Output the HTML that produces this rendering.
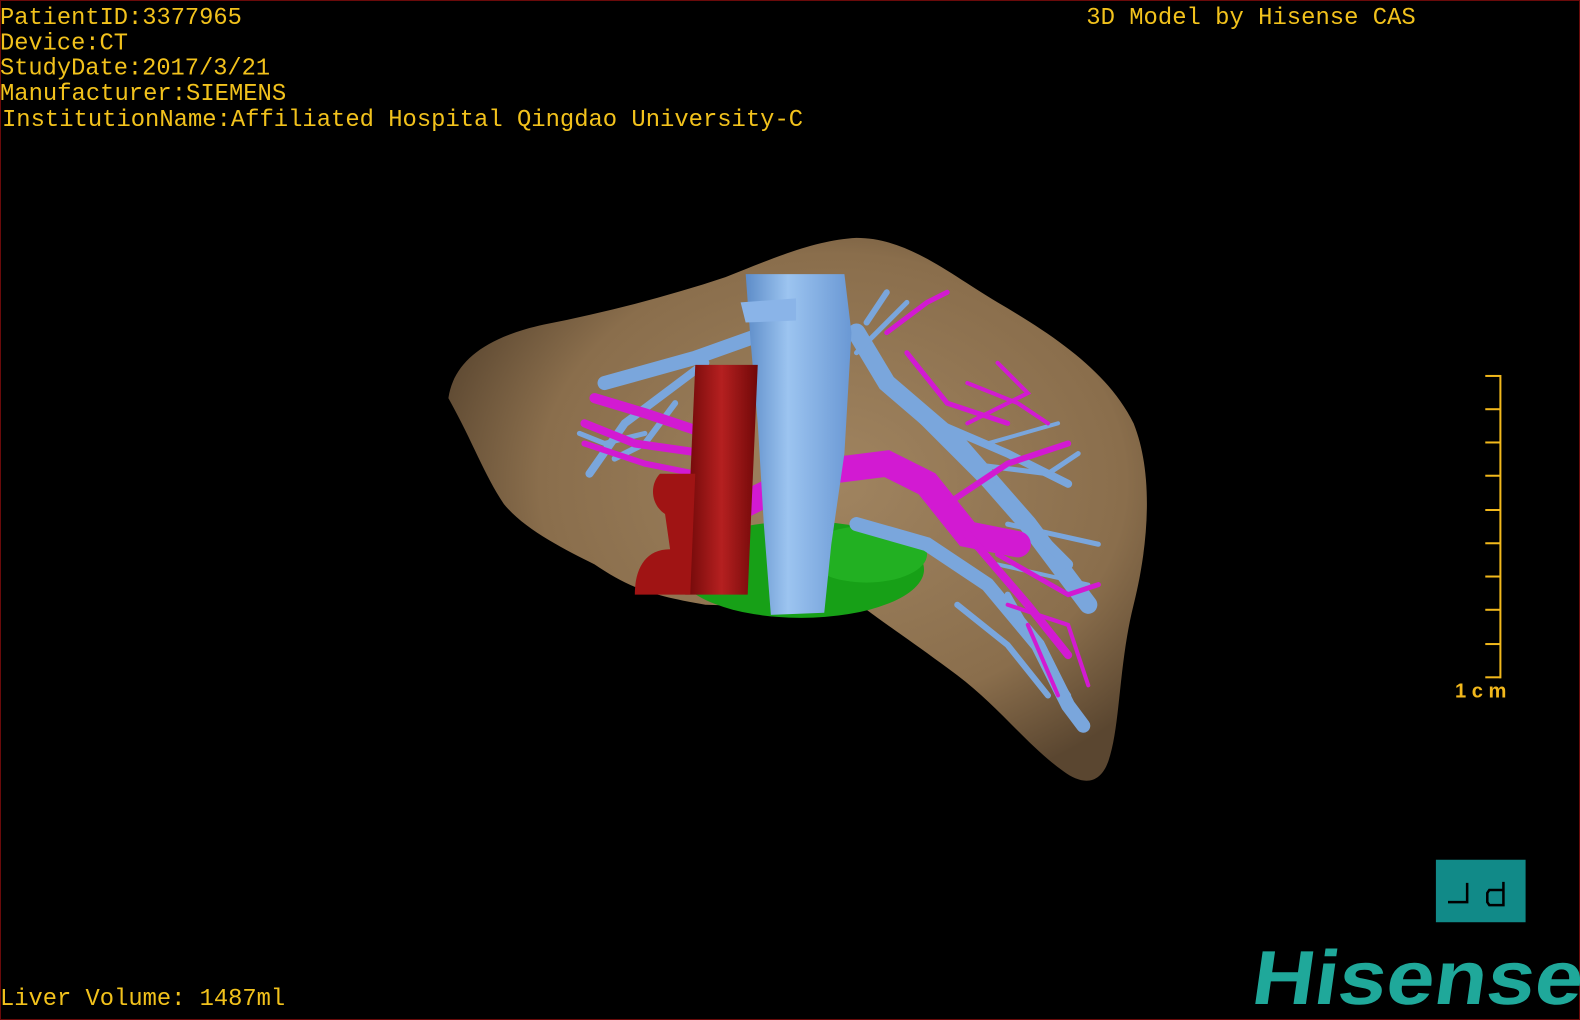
<!DOCTYPE html>
<html><head><meta charset="utf-8"><style>
html,body{margin:0;padding:0;background:#000;overflow:hidden}
svg{display:block}
text{font-family:"Liberation Mono",monospace}
</style></head><body>
<svg width="1580" height="1020" viewBox="0 0 1568 1012" preserveAspectRatio="none" xmlns="http://www.w3.org/2000/svg">
<defs>
<radialGradient id="lv" cx="0.55" cy="0.45" r="0.6">
<stop offset="0" stop-color="#a08460"/><stop offset="0.7" stop-color="#8a6e4c"/><stop offset="1" stop-color="#5a4630"/>
</radialGradient>
<linearGradient id="ivc" x1="0" x2="1"><stop offset="0" stop-color="#5d8cc8"/><stop offset="0.4" stop-color="#9cc4f0"/><stop offset="1" stop-color="#6a98d4"/></linearGradient>
<linearGradient id="ao" x1="0" x2="1"><stop offset="0" stop-color="#6e0808"/><stop offset="0.5" stop-color="#b52020"/><stop offset="1" stop-color="#700808"/></linearGradient>
</defs>
<rect x="0" y="0" width="1568" height="1012" fill="#000" stroke="#6a0a0a" stroke-width="2"/>
<!-- liver -->
<path d="M445,395 C450,360 480,335 540,322 C600,310 660,295 720,275 C770,255 810,238 850,236 C900,236 940,270 990,300 C1050,335 1100,370 1125,420 C1145,470 1140,540 1125,600 C1110,660 1112,720 1100,755 C1092,778 1075,780 1055,765 C1020,740 990,700 950,670 C910,640 880,620 860,605 L700,600 C640,590 620,580 590,560 C560,545 520,525 500,500 C480,470 470,440 445,395 Z" fill="url(#lv)"/>
<!-- green -->
<ellipse cx="795" cy="565" rx="122" ry="48" fill="#17a017"/>
<ellipse cx="860" cy="550" rx="60" ry="28" fill="#22b022"/>
<!-- blue hepatic branches -->
<g stroke="#7aa6dc" stroke-linecap="round" fill="none">
<path d="M760,330 L690,355 L600,380" stroke-width="14"/>
<path d="M700,360 L620,420 L585,470" stroke-width="8"/>
<path d="M670,400 L640,440 L610,455" stroke-width="6"/>
<path d="M850,330 L880,380 L950,440 L1020,520 L1080,600" stroke-width="18"/>
<path d="M900,400 L980,480 L1060,560" stroke-width="10"/>
<path d="M930,420 L1000,450 L1060,480" stroke-width="8"/>
<path d="M850,520 L920,540 L980,580 L1030,640 L1060,700 L1075,720" stroke-width="14"/>
<path d="M1000,590 L1040,660 L1060,690" stroke-width="6"/>
<path d="M860,320 L880,290" stroke-width="6"/>
<path d="M850,350 L900,300" stroke-width="5"/>
<path d="M960,460 L1040,470 L1070,450" stroke-width="5"/>
<path d="M1000,520 L1090,540" stroke-width="5"/>
<path d="M990,560 L1080,580" stroke-width="4"/>
<path d="M950,600 L1000,640 L1040,690" stroke-width="6"/>
<path d="M640,430 L600,440 L575,430" stroke-width="5"/>
<path d="M980,440 L1050,420" stroke-width="4"/>
</g>
<!-- magenta portal -->
<g stroke="#d21ad2" stroke-linecap="round" fill="none">
<path d="M740,500 L800,470 L880,460 L920,480 L960,530 L1010,540" stroke-width="26"/>
<path d="M700,430 L640,410 L590,395" stroke-width="10"/>
<path d="M700,450 L630,440 L580,420" stroke-width="8"/>
<path d="M690,470 L640,460 L580,440" stroke-width="6"/>
<path d="M940,500 L1000,460 L1060,440" stroke-width="6"/>
<path d="M960,530 L1020,600 L1060,650" stroke-width="8"/>
<path d="M990,550 L1060,590 L1090,580" stroke-width="5"/>
<path d="M880,330 L920,300 L940,290" stroke-width="5"/>
<path d="M900,350 L940,400 L1000,420" stroke-width="5"/>
<path d="M960,380 L1010,400 L1040,420" stroke-width="4"/>
<path d="M1020,620 L1050,690" stroke-width="4"/>
<path d="M960,420 L1020,390 L990,360" stroke-width="4"/>
<path d="M1000,600 L1060,620 L1080,680" stroke-width="4"/>
</g>
<!-- IVC -->
<path d="M740,272 L838,272 L845,330 L838,450 L825,540 L818,608 L765,610 L758,520 L752,420 L745,340 Z" fill="url(#ivc)"/>
<path d="M735,300 L790,296 L790,318 L740,320 Z" fill="#8ab4e8"/>
<!-- aorta -->
<path d="M690,362 L752,362 L742,590 L680,590 Z" fill="url(#ao)"/>
<path d="M655,470 C645,480 645,500 660,510 L665,545 C640,545 630,565 630,590 L685,590 L690,470 Z" fill="#a01414"/>
<!-- text -->
<g fill="#f2c21c" font-size="23.5">
<text x="0" y="24" textLength="240" lengthAdjust="spacingAndGlyphs">PatientID:3377965</text>
<text x="0" y="49" textLength="127" lengthAdjust="spacingAndGlyphs">Device:CT</text>
<text x="0" y="74" textLength="268" lengthAdjust="spacingAndGlyphs">StudyDate:2017/3/21</text>
<text x="0" y="99" textLength="284" lengthAdjust="spacingAndGlyphs">Manufacturer:SIEMENS</text>
<text x="2" y="125" textLength="795" lengthAdjust="spacingAndGlyphs">InstitutionName:Affiliated Hospital Qingdao University-C</text>
<text x="1078" y="24" textLength="327" lengthAdjust="spacingAndGlyphs">3D Model by Hisense CAS</text>
<text x="0" y="997" textLength="283" lengthAdjust="spacingAndGlyphs">Liver Volume: 1487ml</text>
</g>
<!-- scale bar -->
<g stroke="#f2b81c" stroke-width="2">
<line x1="1489" y1="372" x2="1489" y2="673"/>
<line x1="1474" y1="373" x2="1489" y2="373"/>
<line x1="1474" y1="406" x2="1489" y2="406"/>
<line x1="1474" y1="439" x2="1489" y2="439"/>
<line x1="1474" y1="472" x2="1489" y2="472"/>
<line x1="1474" y1="506" x2="1489" y2="506"/>
<line x1="1474" y1="539" x2="1489" y2="539"/>
<line x1="1474" y1="572" x2="1489" y2="572"/>
<line x1="1474" y1="605" x2="1489" y2="605"/>
<line x1="1474" y1="639" x2="1489" y2="639"/>
<line x1="1474" y1="672" x2="1489" y2="672"/>
</g>
<text x="1444" y="692" fill="#f2b81c" font-size="20" font-weight="bold" textLength="51" lengthAdjust="spacing" style="font-family:'Liberation Sans',sans-serif">1cm</text>
<!-- logo -->
<rect x="1425" y="853" width="89" height="62" fill="#118a88"/>
<g stroke="#000" stroke-width="2.5" fill="none">
<path d="M1437,895 L1456,895 L1456,876"/>
<path d="M1492,875 L1492,898 L1478,898 L1476,895 L1476,886 L1478,883 L1492,883"/>
</g>
<text x="1240" y="996" fill="#1fa89a" font-size="76" font-weight="bold" textLength="328" lengthAdjust="spacingAndGlyphs" transform="skewX(-8) translate(140,0)" style="font-family:'Liberation Sans',sans-serif">Hisense</text>
</svg>
</body></html>
